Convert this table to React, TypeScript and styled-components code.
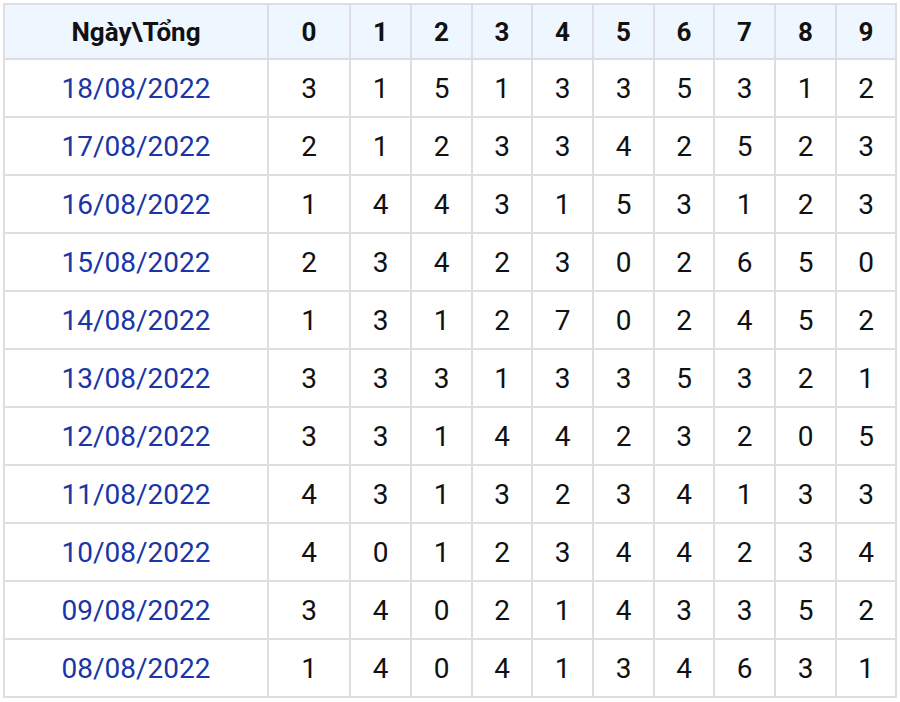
import React from "react";
import styled, { createGlobalStyle } from "styled-components";

const Global = createGlobalStyle`
  html, body { margin: 0; padding: 0; background: #ffffff; }
  body { font-family: Roboto, "Liberation Sans", Arial, sans-serif; }
`;

const Wrap = styled.div`
  padding: 3px;
`;

const Table = styled.table`
  border-collapse: collapse;
  table-layout: fixed;
  width: 894px;
  font-family: Roboto, "Liberation Sans", Arial, sans-serif;
`;

const HeadCell = styled.th`
  height: 53px;
  padding: 0;
  border: 2px solid #dddde3;
  background: #eef6ff;
  color: #111111;
  font-size: 26px;
  font-weight: 700;
  text-align: center;
  vertical-align: middle;
`;

const Cell = styled.td<{ $date?: boolean }>`
  height: 56px;
  padding: 0;
  border: 2px solid #dddde3;
  background: #ffffff;
  color: ${(p) => (p.$date ? "#1a35a6" : "#111111")};
  font-size: 28px;
  font-weight: 400;
  text-align: center;
  vertical-align: middle;
`;

const widths = [264, 82, 61, 61, 60, 61, 61, 60, 61, 61, 60];

const rows: [string, number[]][] = [
  ["18/08/2022", [3, 1, 5, 1, 3, 3, 5, 3, 1, 2]],
  ["17/08/2022", [2, 1, 2, 3, 3, 4, 2, 5, 2, 3]],
  ["16/08/2022", [1, 4, 4, 3, 1, 5, 3, 1, 2, 3]],
  ["15/08/2022", [2, 3, 4, 2, 3, 0, 2, 6, 5, 0]],
  ["14/08/2022", [1, 3, 1, 2, 7, 0, 2, 4, 5, 2]],
  ["13/08/2022", [3, 3, 3, 1, 3, 3, 5, 3, 2, 1]],
  ["12/08/2022", [3, 3, 1, 4, 4, 2, 3, 2, 0, 5]],
  ["11/08/2022", [4, 3, 1, 3, 2, 3, 4, 1, 3, 3]],
  ["10/08/2022", [4, 0, 1, 2, 3, 4, 4, 2, 3, 4]],
  ["09/08/2022", [3, 4, 0, 2, 1, 4, 3, 3, 5, 2]],
  ["08/08/2022", [1, 4, 0, 4, 1, 3, 4, 6, 3, 1]],
];

export default function App() {
  return (
    <Wrap>
      <Global />
      <Table>
        <colgroup>
          {widths.map((w, i) => (
            <col key={i} style={{ width: w }} />
          ))}
        </colgroup>
        <thead>
          <tr>
            <HeadCell>Ngày\Tổng</HeadCell>
            {Array.from({ length: 10 }, (_, i) => (
              <HeadCell key={i}>{i}</HeadCell>
            ))}
          </tr>
        </thead>
        <tbody>
          {rows.map(([d, vals]) => (
            <tr key={d}>
              <Cell $date>{d}</Cell>
              {vals.map((v, i) => (
                <Cell key={i}>{v}</Cell>
              ))}
            </tr>
          ))}
        </tbody>
      </Table>
    </Wrap>
  );
}
